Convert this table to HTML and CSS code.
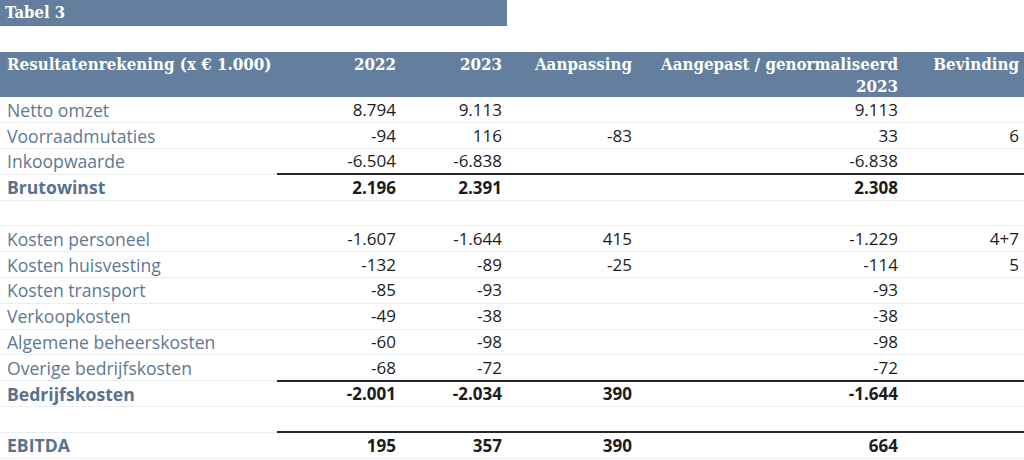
FILE: index.html
```html
<!DOCTYPE html>
<html lang="nl">
<head>
<meta charset="utf-8">
<title>Tabel 3</title>
<link rel="stylesheet" href="styles.css">
</head>
<body>
<div class="title-bar">Tabel 3</div>
<table class="result">
  <colgroup>
    <col class="c-label"><col class="c-y1"><col class="c-y2"><col class="c-adj"><col class="c-norm"><col class="c-find">
  </colgroup>
  <thead>
    <tr>
      <th class="lbl">Resultatenrekening (x € 1.000)</th>
      <th>2022</th>
      <th>2023</th>
      <th>Aanpassing</th>
      <th>Aangepast / genormaliseerd<br>2023</th>
      <th>Bevinding</th>
    </tr>
  </thead>
  <tbody>
    <tr><td class="lbl">Netto omzet</td><td>8.794</td><td>9.113</td><td></td><td>9.113</td><td></td></tr>
    <tr><td class="lbl">Voorraadmutaties</td><td>-94</td><td>116</td><td>-83</td><td>33</td><td>6</td></tr>
    <tr><td class="lbl">Inkoopwaarde</td><td>-6.504</td><td>-6.838</td><td></td><td>-6.838</td><td></td></tr>
    <tr class="total"><td class="lbl">Brutowinst</td><td>2.196</td><td>2.391</td><td></td><td>2.308</td><td></td></tr>
    <tr class="blank"><td class="lbl"></td><td></td><td></td><td></td><td></td><td></td></tr>
    <tr><td class="lbl">Kosten personeel</td><td>-1.607</td><td>-1.644</td><td>415</td><td>-1.229</td><td>4+7</td></tr>
    <tr><td class="lbl">Kosten huisvesting</td><td>-132</td><td>-89</td><td>-25</td><td>-114</td><td>5</td></tr>
    <tr><td class="lbl">Kosten transport</td><td>-85</td><td>-93</td><td></td><td>-93</td><td></td></tr>
    <tr><td class="lbl">Verkoopkosten</td><td>-49</td><td>-38</td><td></td><td>-38</td><td></td></tr>
    <tr><td class="lbl">Algemene beheerskosten</td><td>-60</td><td>-98</td><td></td><td>-98</td><td></td></tr>
    <tr><td class="lbl">Overige bedrijfskosten</td><td>-68</td><td>-72</td><td></td><td>-72</td><td></td></tr>
    <tr class="total"><td class="lbl">Bedrijfskosten</td><td>-2.001</td><td>-2.034</td><td>390</td><td>-1.644</td><td></td></tr>
    <tr class="blank"><td class="lbl"></td><td></td><td></td><td></td><td></td><td></td></tr>
    <tr class="total"><td class="lbl">EBITDA</td><td>195</td><td>357</td><td>390</td><td>664</td><td></td></tr>
  </tbody>
</table>
</body>
</html>
```
FILE: styles.css
```css
html, body {
  margin: 0;
  padding: 0;
  background: #ffffff;
}

body {
  font-family: "Open Sans", "Liberation Sans", sans-serif;
  width: 1024px;
  height: 460px;
  overflow: hidden;
}

.title-bar {
  width: 507px;
  height: 26px;
  box-sizing: border-box;
  background: #637f9d;
  color: #ffffff;
  font-family: "DejaVu Serif Condensed", "DejaVu Serif", serif;
  font-stretch: condensed;
  font-weight: bold;
  font-size: 16.5px;
  line-height: 26px;
  padding-left: 5px;
  margin-bottom: 26px;
}

.result {
  width: 1024px;
  border-collapse: collapse;
  table-layout: fixed;
}

.c-label { width: 277px; }
.c-y1 { width: 124px; }
.c-y2 { width: 106px; }
.c-adj { width: 130px; }
.c-norm { width: 266px; }
.c-find { width: 121px; }

.result thead th {
  background: #637f9d;
  color: #ffffff;
  font-family: "DejaVu Serif Condensed", "DejaVu Serif", serif;
  font-stretch: condensed;
  font-weight: bold;
  font-size: 16.8px;
  line-height: 22px;
  height: 45px;
  box-sizing: border-box;
  padding: 1px 5px 0 7px;
  text-align: right;
  vertical-align: top;
}

.result thead th.lbl {
  text-align: left;
}

.result tbody td {
  height: 25.8px;
  box-sizing: border-box;
  padding: 0 5px 0 7px;
  font-size: 17px;
  line-height: 24px;
  color: #1c1c1c;
  text-align: right;
  border-bottom: 1px solid #ebedef;
  white-space: nowrap;
}

.result tbody td.lbl {
  text-align: left;
  color: #5e7893;
  font-size: 17.6px;
}

.result tbody tr.total td {
  font-weight: bold;
  border-top: 2px solid #262626;
}

.result tbody tr.total td.lbl {
  border-top: 1px solid #ebedef;
  color: #56728f;
}
```
